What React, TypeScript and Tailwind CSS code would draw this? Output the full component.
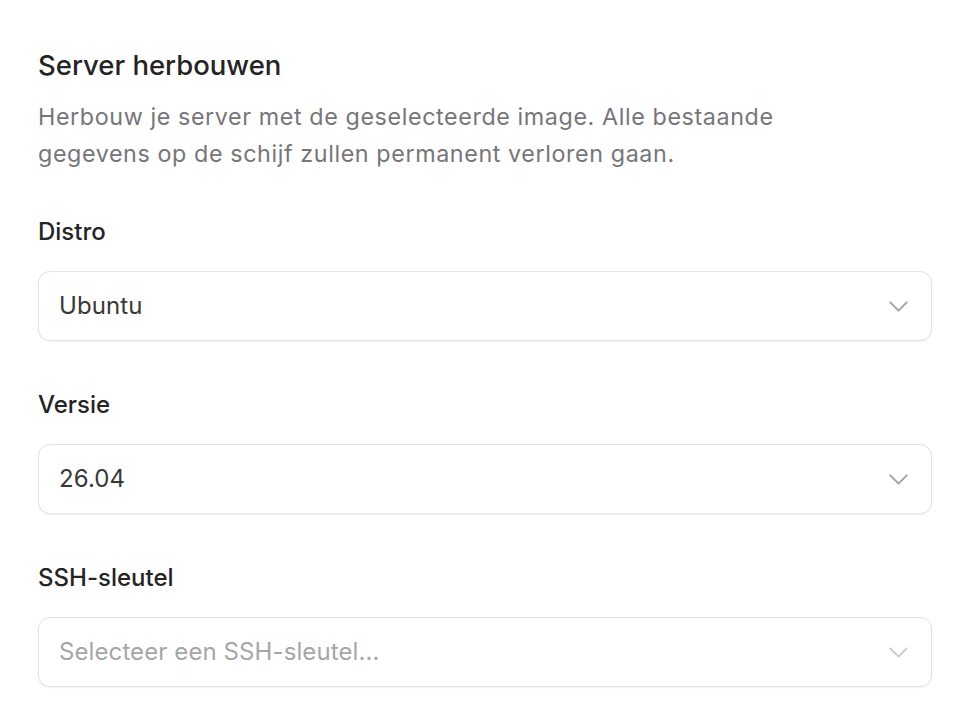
import { ChevronDown } from "lucide-react";

const FIELDS = [
  { label: "Distro", value: "Ubuntu" },
  { label: "Versie", value: "26.04" },
  { label: "SSH-sleutel", value: "", placeholder: "Selecteer een SSH-sleutel..." },
];

export default function App() {
  return (
    <div
      className="min-h-screen bg-white pl-[38px] pr-[32px] pt-[48px]"
      style={{ fontFamily: "Inter, 'Noto Sans', sans-serif" }}
    >
      <h2 className="text-[27.5px] leading-[34px] font-medium text-[#242424]">Server herbouwen</h2>
      <p className="mt-[16px] max-w-[800px] text-[23.3px] leading-[37px] tracking-[0.6px] text-[#76767a]">
        Herbouw je server met de geselecteerde image. Alle bestaande gegevens op de schijf zullen permanent verloren gaan.
      </p>

      <div className="mt-[45px] flex flex-col gap-[49px]">
        {FIELDS.map((f) => (
          <div key={f.label} className="flex flex-col gap-[24px]">
            <label className="text-[24px] leading-[30px] font-medium text-[#242424]">{f.label}</label>
            <button className="flex h-[70px] w-full items-center justify-between rounded-[12px] border border-[#e3e3e3] bg-white pl-[20px] pr-[16px] shadow-[0_1px_2px_rgba(0,0,0,0.06)]">
              <span className={`text-[24px] tracking-[0.1px] ${f.value ? "text-[#383838]" : "text-[#a6a6a6]"}`}>
                {f.value || f.placeholder}
              </span>
              <ChevronDown
                size={33}
                strokeWidth={1.4}
                className={f.value ? "text-[#a3a3a3]" : "text-[#cacaca]"}
              />
            </button>
          </div>
        ))}
      </div>
    </div>
  );
}
